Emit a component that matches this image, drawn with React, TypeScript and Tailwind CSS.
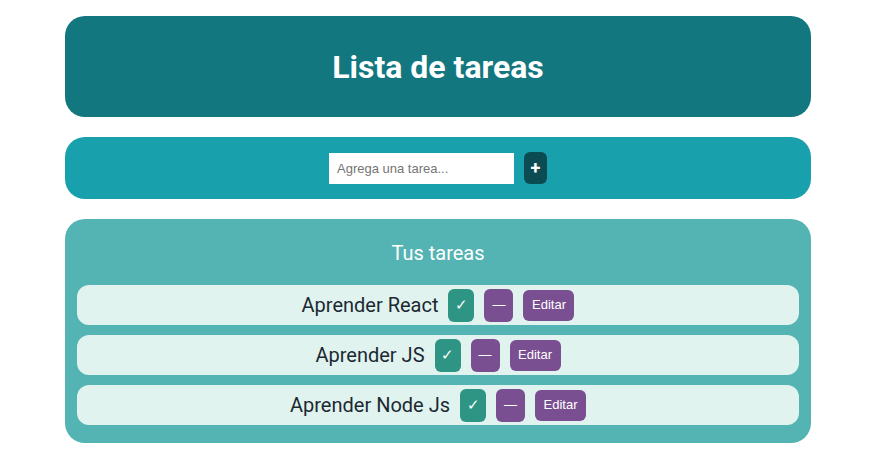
import { useState } from 'react';

export default function App() {
  const [tasks] = useState(['Aprender React', 'Aprender JS', 'Aprender Node Js']);
  const [text, setText] = useState('');

  return (
    <main className="min-h-screen bg-white pt-4 font-['Roboto',sans-serif]">
      <div className="w-[746px] ml-[65px] flex flex-col gap-5">
        <header className="h-[101px] rounded-[20px] bg-[#13777f] flex items-center justify-center">
          <h1 className="text-[32px] font-bold text-white leading-none">Lista de tareas</h1>
        </header>

        <section className="h-[62px] rounded-[20px] bg-[#18a0ad] flex items-center justify-center gap-[10px]">
          <input
            type="text"
            value={text}
            onChange={(e) => setText(e.target.value)}
            placeholder="Agrega una tarea..."
            className="w-[185px] h-[31px] bg-white px-2 text-[13px] font-['Liberation_Sans',sans-serif] text-gray-800 placeholder:text-[#757575] outline-none"
          />
          <button className="w-[23px] h-[32px] rounded-[6px] bg-[#0b4c52] text-white text-[18px] font-bold leading-none flex items-center justify-center">
            +
          </button>
        </section>

        <section className="rounded-[20px] bg-[#54b3b3] px-3 pt-5 pb-[18px]">
          <h2 className="text-[20px] text-white text-center leading-7 mb-[18px]">Tus tareas</h2>
          <ul className="flex flex-col gap-[10px]">
            {tasks.map((task) => (
              <li key={task} className="h-10 rounded-[12px] bg-[#e1f3ee] flex items-center justify-center gap-[10px]">
                <span className="text-[20px] text-[#1c2933]">{task}</span>
                <button className="w-[26px] h-[33px] rounded-[6px] bg-[#2e9484] text-white text-[15px] flex items-center justify-center">
                  ✓
                </button>
                <button className="w-[29px] h-[33px] rounded-[6px] bg-[#7a4f92] text-white text-[13px] font-['Liberation_Sans',sans-serif] flex items-center justify-center">
                  —
                </button>
                <button className="w-[51px] h-[31px] rounded-[6px] bg-[#7a4f92] text-white text-[13px] font-['Liberation_Sans',sans-serif] flex items-center justify-center">
                  Editar
                </button>
              </li>
            ))}
          </ul>
        </section>
      </div>
    </main>
  );
}
